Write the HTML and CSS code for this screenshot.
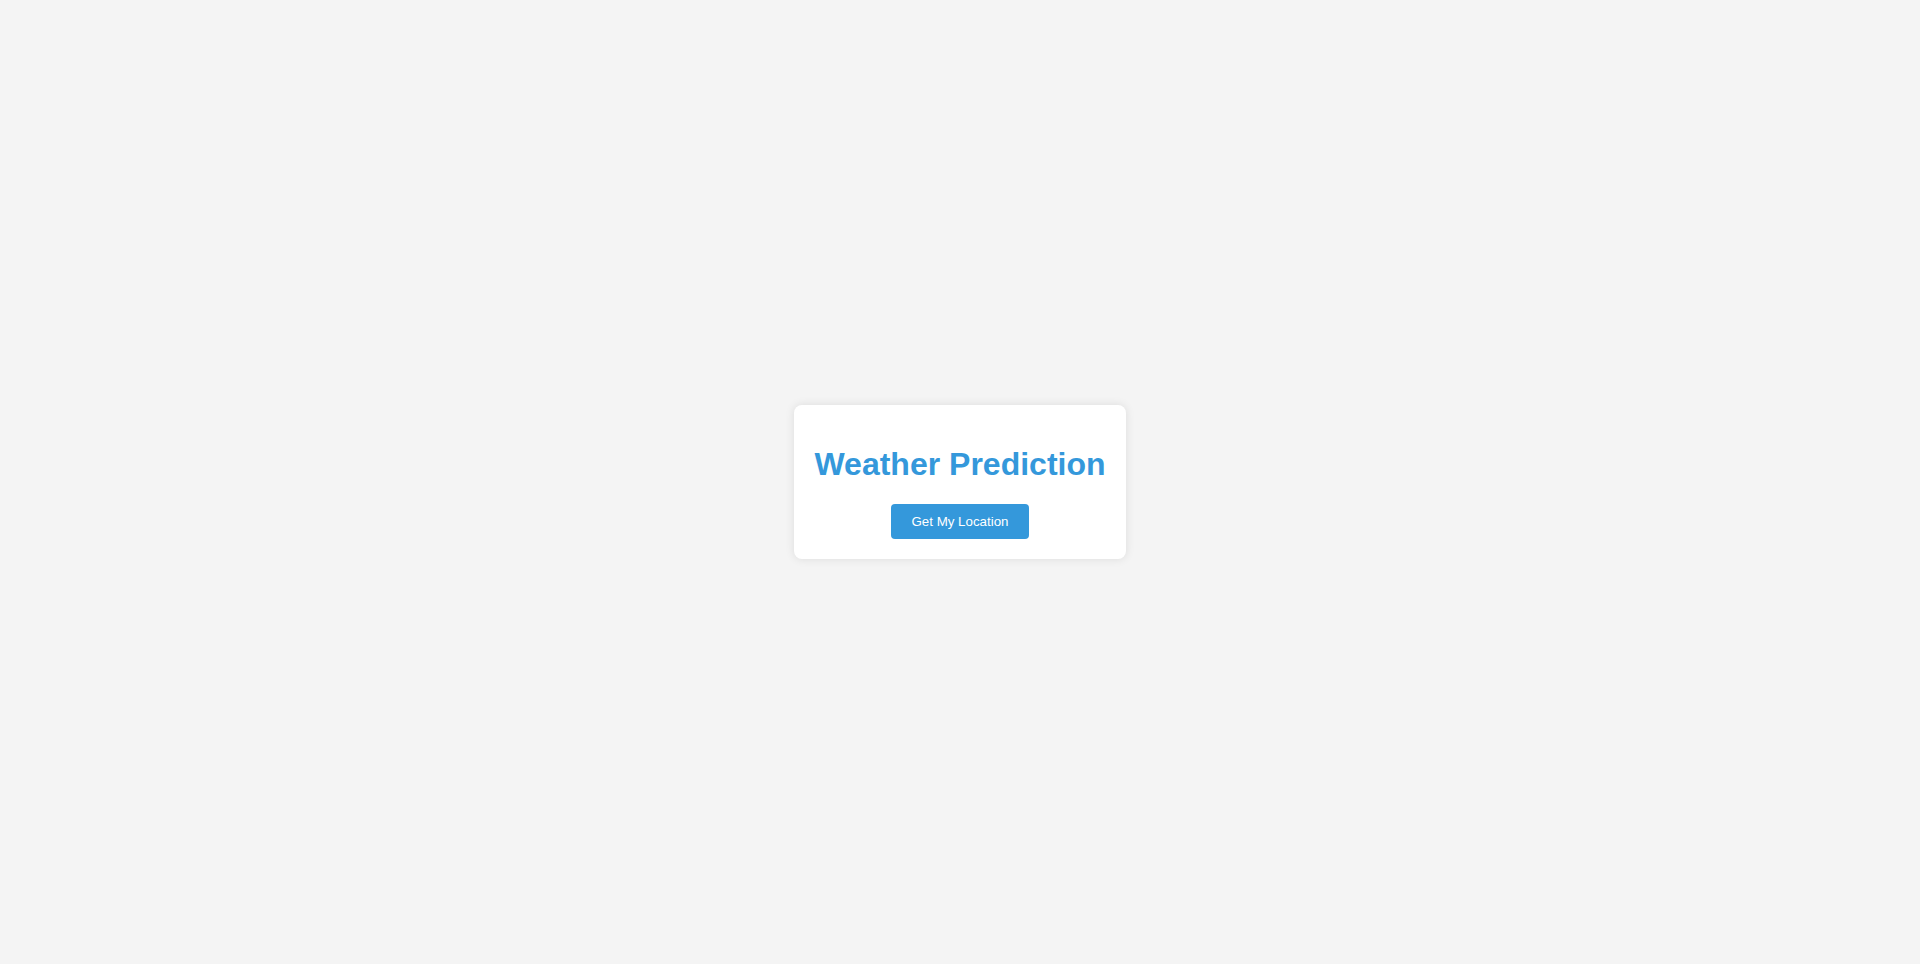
FILE: index.html
```html
<!DOCTYPE html>
<html lang="en">
<head>
<meta charset="UTF-8">
<title>Weather Prediction</title>
<link rel="stylesheet" href="styles.css">
</head>
<body>
<div class="container">
  <h1 class="title">Weather Prediction</h1>
  <button class="locate-btn">Get My Location</button>
</div>
</body>
</html>
```
FILE: styles.css
```css
html, body {
  margin: 0;
  padding: 0;
}
body {
  font-family: "Liberation Sans", Arial, sans-serif;
  background: #f4f4f4;
  height: 100vh;
  display: flex;
  align-items: center;
  justify-content: center;
}
.container {
  background: #fff;
  padding: 20px;
  border-radius: 8px;
  box-shadow: 0 0 10px rgba(0, 0, 0, 0.1);
  text-align: center;
}
.title {
  color: #3498db;
  font-size: 32px;
  margin: 21.44px 0;
  font-weight: bold;
}
.locate-btn {
  background: #3498db;
  color: #fff;
  border: none;
  padding: 10px 20px;
  border-radius: 4px;
  font-family: "Liberation Sans", Arial, sans-serif;
  font-size: 13.333px;
  font-weight: normal;
  cursor: pointer;
}
```
